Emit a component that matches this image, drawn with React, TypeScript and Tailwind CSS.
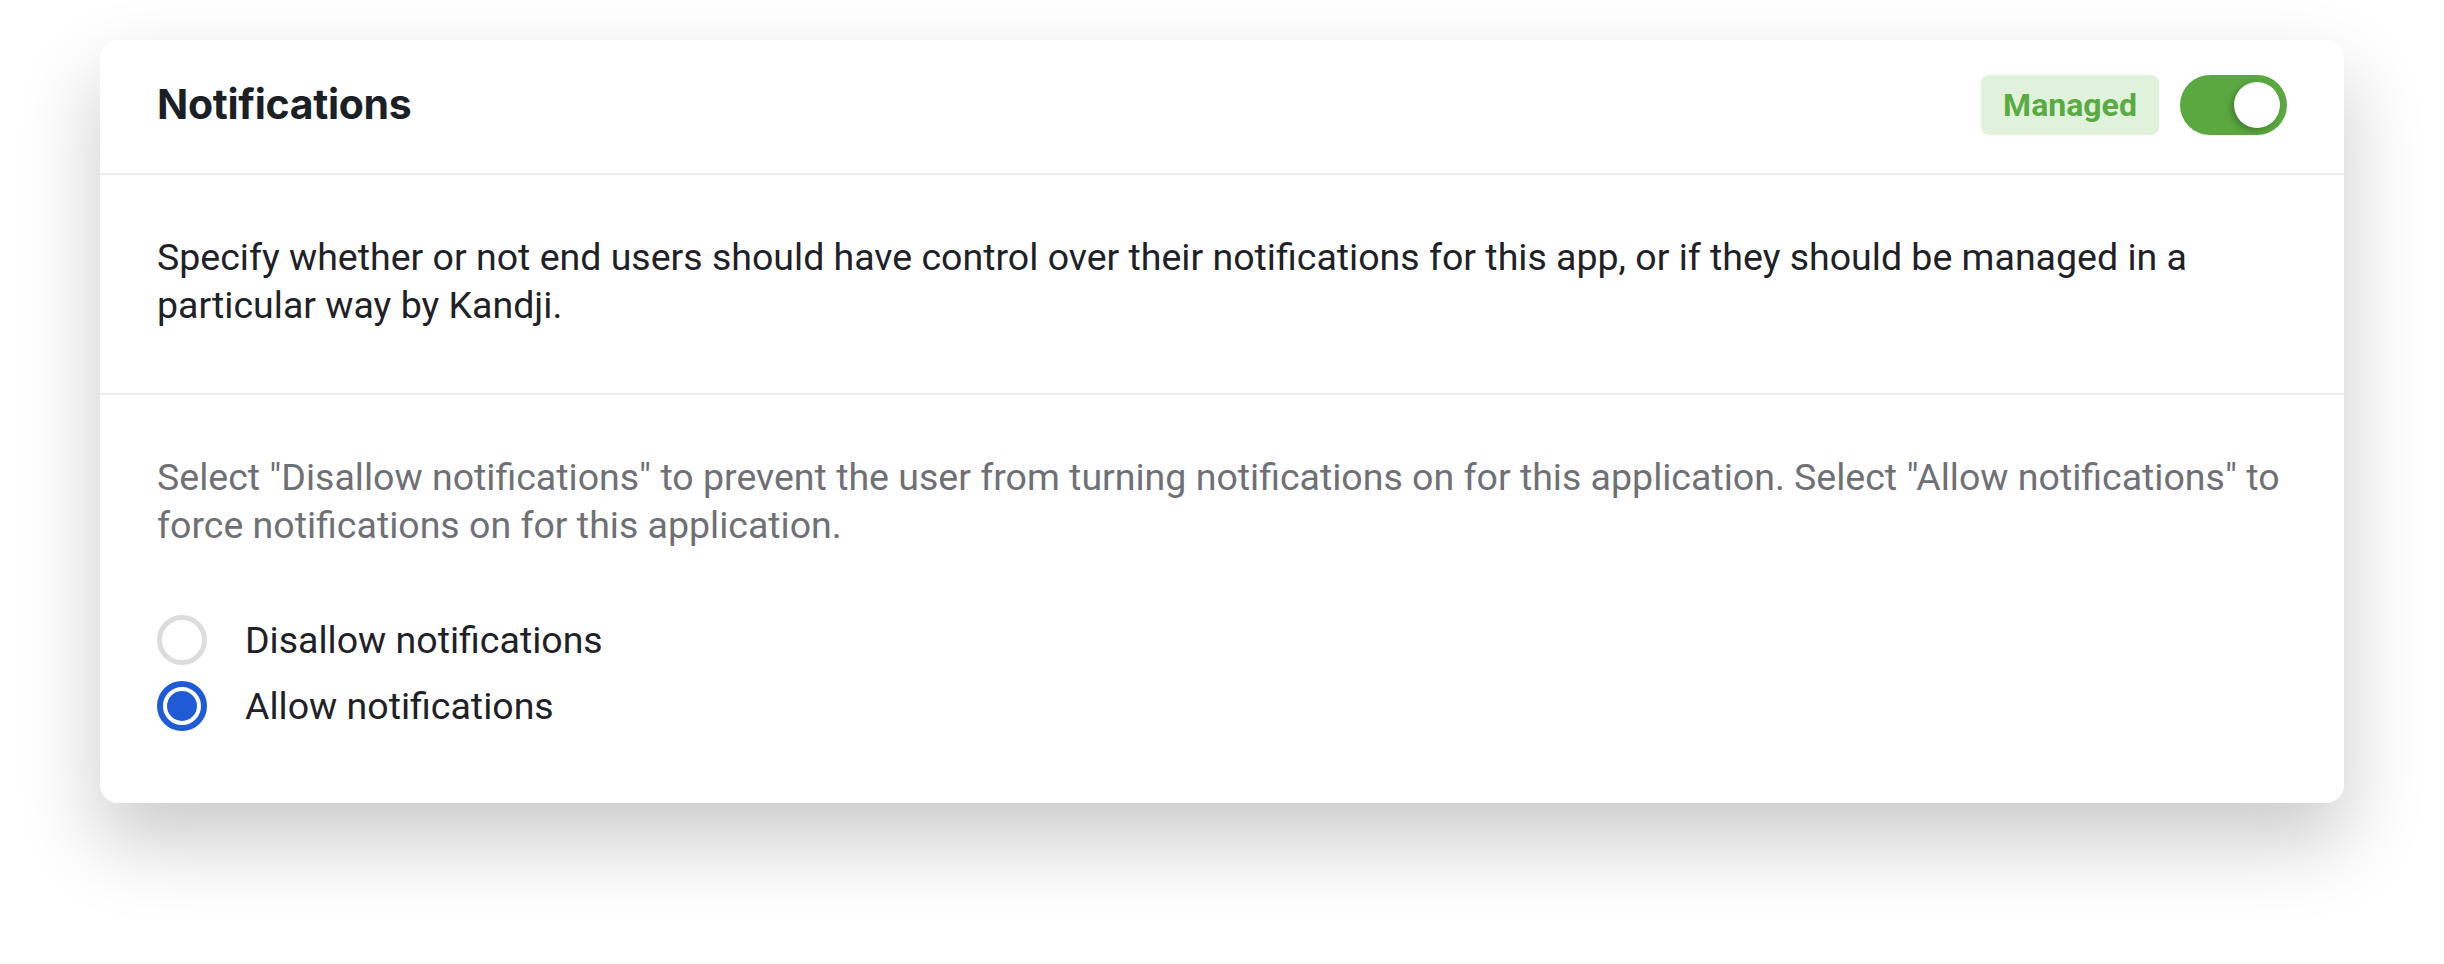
import React, { useState } from "react";

const body = "font-['Roboto','Liberation_Sans',sans-serif]";

const Radio: React.FC<{ checked: boolean; label: string; onClick: () => void }> = ({
  checked,
  label,
  onClick,
}) => (
  <div onClick={onClick} className="flex items-center h-[50px] cursor-pointer">
    {checked ? (
      <div className="w-[50px] h-[50px] rounded-full border-[6px] border-[#1f5bd6] flex items-center justify-center">
        <div className="w-[30px] h-[30px] rounded-full bg-[#1f5bd6]" />
      </div>
    ) : (
      <div className="w-[50px] h-[50px] rounded-full border-[5px] border-[#dcdcdc] bg-white" />
    )}
    <span className={`${body} ml-[38px] text-[37.5px] leading-[48px] text-[#1e2127]`}>{label}</span>
  </div>
);

const App: React.FC = () => {
  const [allow, setAllow] = useState(true);
  const [managed, setManaged] = useState(true);

  return (
    <div className="w-full min-h-[964px] bg-white pt-[40px] px-[100px]">
      <div className="bg-white rounded-[18px] shadow-[0_38px_80px_rgba(0,0,0,0.21)]">
        {/* Header */}
        <div className="h-[135px] px-[57px] pb-[3px] flex items-center justify-between border-b-2 border-[#eeeeee]">
          <h1 className="font-['Inter',sans-serif] font-bold text-[41px] text-[#1b1f26] tracking-[-0.3px]">
            Notifications
          </h1>
          <div className="flex items-center gap-[21px]">
            <span
              className={`${body} h-[60px] w-[178px] rounded-[8px] bg-[#e1f2dc] text-[#5aab43] font-bold text-[32px] flex items-center justify-center`}
            >
              Managed
            </span>
            <button
              onClick={() => setManaged(!managed)}
              className={`w-[107px] h-[60px] rounded-full flex items-center px-[7px] ${
                managed ? "bg-[#5aa83f] justify-end" : "bg-[#d5d5d5] justify-start"
              }`}
            >
              <span className="w-[46px] h-[46px] rounded-full bg-white shadow-[-3px_3px_6px_rgba(0,0,0,0.25)]" />
            </button>
          </div>
        </div>

        {/* Description */}
        <div className="px-[57px] pt-[58px] pb-[64px] border-b-2 border-[#eeeeee]">
          <p className={`${body} text-[37.5px] leading-[48px] text-[#1e2127] whitespace-nowrap`}>
            Specify whether or not end users should have control over their notifications for this app, or if they should be managed in a
            <br />
            particular way by Kandji.
          </p>
        </div>

        {/* Options */}
        <div className="px-[57px] pt-[58px] pb-[72px]">
          <p className={`${body} text-[37.5px] leading-[48px] text-[#6e7076] whitespace-nowrap`}>
            Select "Disallow notifications" to prevent the user from turning notifications on for this application. Select "Allow notifications" to
            <br />
            force notifications on for this application.
          </p>
          <div className="mt-[66px] flex flex-col gap-[16px]">
            <Radio checked={!allow} label="Disallow notifications" onClick={() => setAllow(false)} />
            <Radio checked={allow} label="Allow notifications" onClick={() => setAllow(true)} />
          </div>
        </div>
      </div>
    </div>
  );
};

export default App;
